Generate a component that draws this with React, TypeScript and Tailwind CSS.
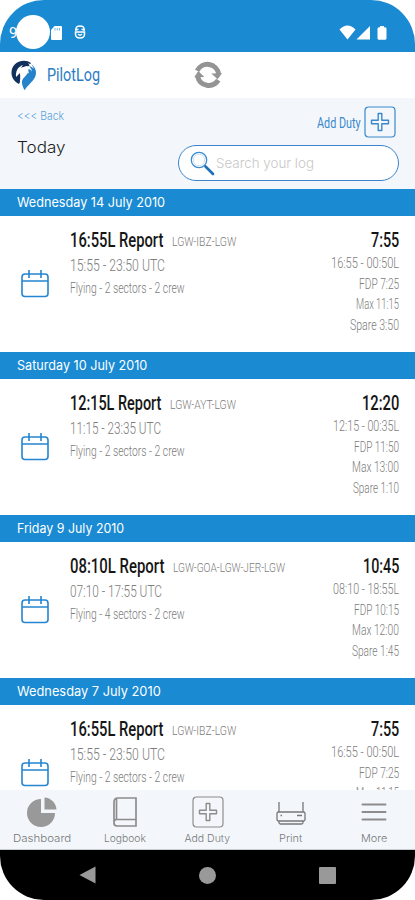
import { useLayoutEffect, useRef, useState } from "react";
import type { ReactNode } from "react";

type Duty = {
  date: string;
  dateWidth: number;
  report: string;
  reportWidth: number;
  route: string;
  routeWidth: number;
  utc: string;
  utcWidth: number;
  summary: string;
  total: string;
  totalWidth: number;
  details: [string, number][];
};

const duties: Duty[] = [
  {
    date: "Wednesday 14 July 2010",
    dateWidth: 148,
    report: "16:55L Report",
    reportWidth: 93,
    route: "LGW-IBZ-LGW",
    routeWidth: 64,
    utc: "15:55 - 23:50 UTC",
    utcWidth: 95,
    summary: "Flying - 2 sectors - 2 crew",
    total: "7:55",
    totalWidth: 28,
    details: [
      ["16:55 - 00:50L", 68],
      ["FDP 7:25", 40],
      ["Max 11:15", 43],
      ["Spare 3:50", 49],
    ],
  },
  {
    date: "Saturday 10 July 2010",
    dateWidth: 130,
    report: "12:15L Report",
    reportWidth: 91,
    route: "LGW-AYT-LGW",
    routeWidth: 66,
    utc: "11:15 - 23:35 UTC",
    utcWidth: 91,
    summary: "Flying - 2 sectors - 2 crew",
    total: "12:20",
    totalWidth: 37,
    details: [
      ["12:15 - 00:35L", 66],
      ["FDP 11:50", 45],
      ["Max 13:00", 47],
      ["Spare 1:10", 46],
    ],
  },
  {
    date: "Friday 9 July 2010",
    dateWidth: 107,
    report: "08:10L Report",
    reportWidth: 94,
    route: "LGW-GOA-LGW-JER-LGW",
    routeWidth: 112,
    utc: "07:10 - 17:55 UTC",
    utcWidth: 92,
    summary: "Flying - 4 sectors - 2 crew",
    total: "10:45",
    totalWidth: 36,
    details: [
      ["08:10 - 18:55L", 66],
      ["FDP 10:15", 45],
      ["Max 12:00", 47],
      ["Spare 1:45", 47],
    ],
  },
  {
    date: "Wednesday 7 July 2010",
    dateWidth: 144,
    report: "16:55L Report",
    reportWidth: 93,
    route: "LGW-IBZ-LGW",
    routeWidth: 64,
    utc: "15:55 - 23:50 UTC",
    utcWidth: 95,
    summary: "Flying - 2 sectors - 2 crew",
    total: "7:55",
    totalWidth: 28,
    details: [
      ["16:55 - 00:50L", 68],
      ["FDP 7:25", 40],
      ["Max 11:15", 43],
      ["Spare 3:50", 49],
    ],
  },
];

// Condenses a single line of text to the given width
function Fit({
  width,
  className = "",
  children,
}: {
  width: number;
  className?: string;
  children: ReactNode;
}) {
  const ref = useRef<HTMLSpanElement>(null);
  const [scale, setScale] = useState(1);

  useLayoutEffect(() => {
    if (ref.current) setScale(width / ref.current.offsetWidth);
  }, [width]);

  return (
    <span className={`block shrink-0 ${className}`} style={{ width }}>
      <span
        ref={ref}
        className="inline-block origin-left whitespace-nowrap align-top"
        style={{ transform: `scaleX(${scale})` }}
      >
        {children}
      </span>
    </span>
  );
}

function PlusBox({ className }: { className: string }) {
  return (
    <svg viewBox="0 0 32 32" fill="none" stroke="currentColor" className={className}>
      <rect x="1" y="1" width="30" height="30" rx="3.5" strokeWidth="1.2" />
      <path
        d="M14.200 7.500h3.600v6.700h6.700v3.600h-6.700v6.700h-3.600v-6.700H7.500v-3.600h6.700z"
        strokeWidth="1.4"
        strokeLinejoin="round"
      />
    </svg>
  );
}

function CalendarIcon() {
  return (
    <svg
      viewBox="0 0 28 29"
      fill="none"
      stroke="#2585cf"
      strokeWidth="1.6"
      className="h-[29px] w-7"
    >
      <rect x="1" y="5" width="26" height="22.5" rx="3" />
      <path d="M1 12h26M8 1v8M20 1v8" />
    </svg>
  );
}

function StatusBar() {
  return (
    <div className="flex h-[52px] shrink-0 items-start bg-[#1a8ad2] pl-[9px] text-white">
      <div className="mt-[23px] w-[7px] text-[15px] leading-5">9</div>
      <div className="mt-[15px] size-[34px] shrink-0 rounded-full bg-white" />
      <svg viewBox="0 0 12 14" fill="currentColor" className="mt-[26px] h-[14px] w-3">
        <path d="M4.5 0H11q1 0 1 1v12q0 1-1 1H2q-1 0-1-1V4z" />
        <path d="M5 2v2.500M7.300 2v2.500M9.500 2v2.500" stroke="#1a8ad2" strokeWidth=".6" />
      </svg>
      <svg
        viewBox="0 0 12 14"
        fill="none"
        stroke="currentColor"
        className="ml-[12px] mt-[25px] h-[14px] w-3"
      >
        <path d="M2 6V4q0-3 4-3t4 3v2M1 4.500h3.500M7.500 4.500h3.500" strokeWidth="1.400" />
        <path d="M1.500 7h9v2q0 4-4.500 4t-4.500-4z" strokeWidth="1.500" />
        <path d="M4 9l2 1.500L8 9" strokeWidth="1.200" />
      </svg>
      <svg
        viewBox="0 0 50 15"
        fill="currentColor"
        className="ml-auto mr-[27px] mt-[25px] h-[15px] w-[50px]"
      >
        <path d="M1.500 4.500Q9.500-3.500 17.500 4.500L9.500 14.500z" />
        <path d="M32 1v13.500H18.500z" />
        <path d="M42 1h4v1.200h1q1.500 0 1.500 1.500v9.500q0 1.500-1.500 1.500h-6q-1.500 0-1.500-1.500V3.700q0-1.500 1.500-1.500h1z" />
      </svg>
    </div>
  );
}

function Toolbar() {
  return (
    <header className="grid h-[46px] shrink-0 grid-cols-[1fr_28px_1fr] items-center bg-white">
      <div className="flex items-center pl-[11px]">
        <svg viewBox="0 0 26 31" className="h-[31px] w-[26px]">
          <path
            d="M13 .8C5.500.800.500 6 .500 12.800c0 4.700 2.500 8.500 6.500 10.700 1.500.8 2-1 2-3l1-10 8-4.500 2-3Q17 .800 13 .800z"
            fill="#12305c"
          />
          <path
            d="M20.500 4.500c3 2 4.500 5 4.500 8.300 0 6.700-5.500 9.200-11.500 17.400-1.500-3-2.700-5.500-2.500-8.500.3-4 4.500-5.500 6-9.500l1-5z"
            fill="#2583cb"
          />
          <path
            d="M5 17c-.3-6 1.500-10 7-12l-2 2.800L15.500 6c3 0 5 2.200 5.500 5.500-1.500-2-3-2.700-4.500-2.700l1.500 4.700-3.500-2.500c-3 1.500-4.500 4-4.500 9.500l-1-7.500z"
            fill="#fff"
          />
          <path d="M17 3.200l3.500 1.300 2.500 4-3.500-2z" fill="#fff" />
        </svg>
        <Fit
          width={53}
          className="ml-[10px] text-[19px] leading-7 text-[#2a7cc4]"
        >
          PilotLog
        </Fit>
      </div>
      <svg viewBox="0 0 28 28" className="size-7" fill="none">
        <path
          d="M3.200 9.800A11.300 11.300 0 0 1 24.600 13"
          stroke="#949494"
          strokeWidth="5"
        />
        <path
          d="M24.300 19.200A11.300 11.300 0 0 1 3.700 15.500"
          stroke="#949494"
          strokeWidth="5"
        />
        <path
          d="M17.300 12.500L28 12.200 23.700 18.300zM.200 16.200L4.300 10l6 6z"
          fill="#949494"
        />
      </svg>
    </header>
  );
}

function SubHeader() {
  return (
    <section className="flex h-[90.5px] shrink-0 justify-between bg-[#f3f7fb] pl-[17px] pr-4">
      <div className="font-[Inter,sans-serif]">
        <Fit
          width={47}
          className="mt-[10px] text-[11.5px] font-light leading-4 text-[#5a9fda]"
        >
          {"<<< Back"}
        </Fit>
        <Fit
          width={48}
          className="mt-[11px] text-[16px] font-light leading-6 text-[#1c1c1c]"
        >
          Today
        </Fit>
      </div>
      <div className="flex flex-col items-end">
        <button
          type="button"
          className="mr-[3px] mt-[8px] flex items-center gap-[3px] text-[#3a88cc]"
        >
          <Fit width={44} className="pt-[2px] text-left text-[14px] leading-6">
            Add Duty
          </Fit>
          <PlusBox className="size-8" />
        </button>
        <div className="mt-[7px] flex h-9 w-[221px] items-center rounded-[18px] border-[1.5px] border-[#3b84cb] bg-white pl-[11px]">
          <svg viewBox="0 0 25 25" fill="none" className="mt-px size-[25px]">
            <circle cx="9" cy="9" r="7.700" stroke="#3b8bd0" strokeWidth="1.300" />
            <circle cx="9" cy="9" r="5.700" stroke="#c2dcf1" strokeWidth=".8" />
            <path
              d="M15.500 15.500l7.500 7.500"
              stroke="#1d6fb8"
              strokeWidth="2.600"
              strokeLinecap="round"
            />
          </svg>
          <Fit
            width={98}
            className="ml-px font-[Inter,sans-serif] text-[13.5px] font-light leading-6 text-[#c8c8c8]"
          >
            Search your log
          </Fit>
        </div>
      </div>
    </section>
  );
}

function DutyItem({ duty }: { duty: Duty }) {
  return (
    <article className="h-[163px] shrink-0">
      <h2 className="h-[27.5px] bg-[#1a8ad2] pl-[17px] font-[Inter,sans-serif] text-[13px] leading-[27px] text-white">
        <Fit width={duty.dateWidth}>{duty.date}</Fit>
      </h2>
      <div className="flex h-[135.5px] bg-white pr-4">
        <div className="w-[70px] pl-[21px] pt-[53px]">
          <CalendarIcon />
        </div>
        <div className="flex-1 pt-[11px] font-light text-[#7c7c7c]">
          <div className="flex h-[27px] leading-[27px]">
            <Fit
              width={duty.reportWidth}
              className="text-[19.5px] font-medium text-[#161616]"
            >
              {duty.report}
            </Fit>
            <Fit width={duty.routeWidth} className="ml-[9px] pt-px text-[13.5px]">
              {duty.route}
            </Fit>
          </div>
          <Fit width={duty.utcWidth} className="text-[17px] leading-[22px]">
            {duty.utc}
          </Fit>
          <Fit width={115} className="text-[14px] leading-6">
            {duty.summary}
          </Fit>
        </div>
        <div className="flex flex-col items-end pt-[11px] font-light text-[#7c7c7c]">
          <Fit
            width={duty.totalWidth}
            className="mb-[-0.7px] text-[19.5px] font-medium leading-[27px] text-[#161616]"
          >
            {duty.total}
          </Fit>
          {duty.details.map(([text, width]) => (
            <Fit
              key={text}
              width={width}
              className="text-[14px] leading-[20.4px]"
            >
              {text}
            </Fit>
          ))}
        </div>
      </div>
    </article>
  );
}

const tabs = [
  {
    label: "Dashboard",
    width: 58,
    icon: (
      <svg viewBox="0 0 30 30" fill="#999" className="size-[30px]">
        <path d="M14 2v14h14A14 14 0 1 1 14 2z" />
        <path d="M17.500.500A13 13 0 0 1 29.500 12.500h-12z" />
      </svg>
    ),
  },
  {
    label: "Logbook",
    width: 42,
    icon: (
      <svg
        viewBox="0 0 24 30"
        fill="none"
        stroke="#8c8c8c"
        strokeWidth="1.700"
        className="h-[30px] w-6"
      >
        <path d="M23 22.500V1H5Q1 1 1 5v21q0 3 3 3h19v-6.500H4q-3 0-3 3M3.500 1.500v21" />
      </svg>
    ),
  },
  {
    label: "Add Duty",
    width: 46,
    icon: <PlusBox className="size-8 text-[#8c8c8c]" />,
  },
  {
    label: "Print",
    width: 23,
    icon: (
      <svg
        viewBox="0 0 30 26"
        fill="none"
        stroke="#777"
        strokeWidth="1.300"
        className="mt-1 h-[26px] w-[30px]"
      >
        <rect x="1" y="11" width="28" height="9" rx="1.500" />
        <path d="M3 11V1M27 11V1M3 20v1.500q0 1.500 1.500 1.500h21q1.500 0 1.500-1.500V20M4.500 14.500h1.500M21 14.500h5" />
      </svg>
    ),
  },
  {
    label: "More",
    width: 26,
    icon: (
      <svg
        viewBox="0 0 26 20"
        stroke="#8c8c8c"
        strokeWidth="2"
        strokeLinecap="round"
        className="h-5 w-[26px]"
      >
        <path d="M1.500 2.500h23M1.500 10h23M1.500 17.500h23" />
      </svg>
    ),
  },
];

function TabBar() {
  return (
    <nav className="grid h-[60px] shrink-0 grid-cols-5 border-b border-[#c8ccd0] bg-[#f3f7fb]">
      {tabs.map((tab) => (
        <div key={tab.label} className="flex flex-col items-center">
          <div className="mt-[6px] flex h-8 items-center">{tab.icon}</div>
          <Fit
            width={tab.width}
            className="mt-[3px] font-[Inter,sans-serif] text-[10.5px] font-light leading-4 text-[#777]"
          >
            {tab.label}
          </Fit>
        </div>
      ))}
    </nav>
  );
}

function SystemBar() {
  return (
    <div className="grid h-[50px] shrink-0 grid-cols-[1fr_17px_1fr] items-center bg-black">
      <svg viewBox="0 0 17 18" fill="#999" className="ml-[79px] h-[18px] w-[17px]">
        <path d="M16.500.5v17L.500 9z" />
      </svg>
      <div className="size-[17px] rounded-full bg-[#999]" />
      <div className="ml-[103px] size-[17px] rounded-[1px] bg-[#999]" />
    </div>
  );
}

export default function App() {
  return (
    <div className="h-[900px] w-[415px] bg-white font-[Roboto,sans-serif]">
      <div className="flex h-full flex-col overflow-hidden rounded-[44px] bg-white">
        <StatusBar />
        <Toolbar />
        <SubHeader />
        <main className="flex min-h-0 flex-1 flex-col overflow-hidden">
          {duties.map((duty) => (
            <DutyItem key={duty.date} duty={duty} />
          ))}
        </main>
        <TabBar />
        <SystemBar />
      </div>
    </div>
  );
}
